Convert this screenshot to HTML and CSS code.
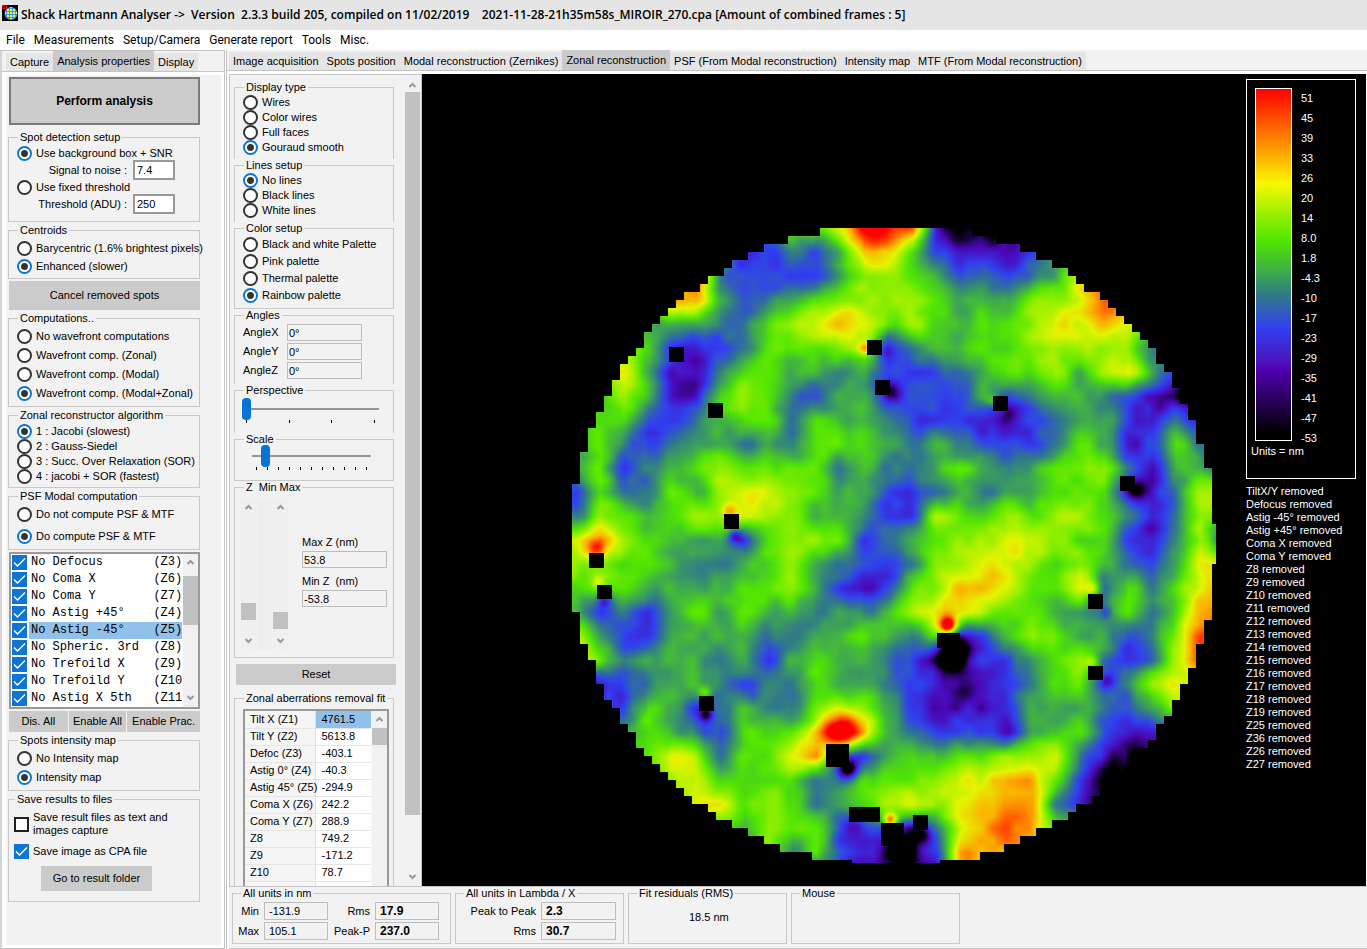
FILE: index.html
```html
<!DOCTYPE html>
<html lang="en">
<head>
<meta charset="utf-8">
<title>Shack Hartmann Analyser</title>
<link rel="stylesheet" href="styles.css">
</head>
<body>
<header class="titlebar">
  <svg class="logo" viewBox="0 0 16 16" aria-hidden="true">
    <rect width="16" height="16" fill="#000"/>
    <circle cx="9" cy="8.500" r="6.500" fill="#3a9be8"/>
    <path d="M5 4h2v2H5zM8 4h2v2H8zM11 4h2v2h-2zM5 7h2v2H5zM8 7h2v2H8zM11 7h2v2h-2zM5 10h2v2H5zM8 10h2v2H8zM11 10h2v2h-2zM8 13h2v1H8zM8 2h2v1H8zM3 7h1v2H3zM14 7h1v2h-1z" fill="#f2f03a"/>
    <path d="M3 .5H.5V2H3v1.500H.5M4.500 0v4" fill="none" stroke="#f00"/>
  </svg>
  <h1 class="title">Shack Hartmann Analyser -&gt;&nbsp; Version&nbsp; 2.3.3 build 205, compiled on 11/02/2019 &nbsp;&nbsp; 2021-11-28-21h35m58s_MIROIR_270.cpa [Amount of combined frames : 5]</h1>
</header>
<nav class="menu">
  <a href="#">File</a><a href="#">Measurements</a><a href="#">Setup/Camera</a><a href="#">Generate report</a><a href="#">Tools</a><a href="#">Misc.</a>
</nav>
<main class="workspace">
  <section class="side">
    <div class="tabs side-tabs">
      <button class="tab">Capture</button><button class="tab active">Analysis properties</button><button class="tab">Display</button>
    </div>
    <div class="side-frame"><div class="side-body">
      <button class="btn primary">Perform analysis</button>
      <fieldset class="group spot">
        <legend>Spot detection setup</legend>
        <label class="opt r15"><input type="radio" name="spot" checked>Use background box + SNR</label>
        <label class="entry">Signal to noise :<input type="text" value="7.4"></label>
        <label class="opt r15"><input type="radio" name="spot">Use fixed threshold</label>
        <label class="entry">Threshold (ADU) :<input type="text" value="250"></label>
      </fieldset>
      <fieldset class="group">
        <legend>Centroids</legend>
        <label class="opt r18"><input type="radio" name="cent">Barycentric (1.6% brightest pixels)</label>
        <label class="opt r18"><input type="radio" name="cent" checked>Enhanced (slower)</label>
      </fieldset>
      <button class="btn tall">Cancel removed spots</button>
      <fieldset class="group">
        <legend>Computations..</legend>
        <label class="opt r19"><input type="radio" name="comp">No wavefront computations</label>
        <label class="opt r19"><input type="radio" name="comp">Wavefront comp. (Zonal)</label>
        <label class="opt r19"><input type="radio" name="comp">Wavefront comp. (Modal)</label>
        <label class="opt r19"><input type="radio" name="comp" checked>Wavefront comp. (Modal+Zonal)</label>
      </fieldset>
      <fieldset class="group">
        <legend>Zonal reconstructor algorithm</legend>
        <label class="opt r15"><input type="radio" name="algo" checked>1 : Jacobi (slowest)</label>
        <label class="opt r15"><input type="radio" name="algo">2 : Gauss-Siedel</label>
        <label class="opt r15"><input type="radio" name="algo">3 : Succ. Over Relaxation (SOR)</label>
        <label class="opt r15"><input type="radio" name="algo">4 : jacobi + SOR (fastest)</label>
      </fieldset>
      <fieldset class="group tight">
        <legend>PSF Modal computation</legend>
        <label class="opt r22"><input type="radio" name="psf">Do not compute PSF &amp; MTF</label>
        <label class="opt r22"><input type="radio" name="psf" checked>Do compute PSF &amp; MTF</label>
      </fieldset>
      <div class="listbox">
        <div class="list-rows">
          <label class="item"><input type="checkbox" checked><span>No Defocus       (Z3)</span></label>
          <label class="item"><input type="checkbox" checked><span>No Coma X        (Z6)</span></label>
          <label class="item"><input type="checkbox" checked><span>No Coma Y        (Z7)</span></label>
          <label class="item"><input type="checkbox" checked><span>No Astig +45°    (Z4)</span></label>
          <label class="item picked"><input type="checkbox" checked><span>No Astig -45°    (Z5)</span></label>
          <label class="item"><input type="checkbox" checked><span>No Spheric. 3rd  (Z8)</span></label>
          <label class="item"><input type="checkbox" checked><span>No Trefoild X    (Z9)</span></label>
          <label class="item"><input type="checkbox" checked><span>No Trefoild Y    (Z10)</span></label>
          <label class="item"><input type="checkbox" checked><span>No Astig X 5th   (Z11)</span></label>
        </div>
        <div class="scroll list-scroll">
          <svg viewBox="0 0 15 17"><path d="M4.500 10l3-3 3 3"/></svg><i class="thumb"></i><svg class="down" viewBox="0 0 15 17"><path d="M4.500 6l3 3 3-3"/></svg>
        </div>
      </div>
      <div class="btn-row"><button class="btn">Dis. All</button><button class="btn">Enable All</button><button class="btn">Enable Prac.</button></div>
      <fieldset class="group">
        <legend>Spots intensity map</legend>
        <label class="opt r19"><input type="radio" name="imap">No Intensity map</label>
        <label class="opt r19"><input type="radio" name="imap" checked>Intensity map</label>
      </fieldset>
      <fieldset class="group save">
        <legend>Save results to files</legend>
        <label class="check"><input type="checkbox"><span>Save result files as text and<br>images capture</span></label>
        <label class="check"><input type="checkbox" checked><span>Save image as CPA file</span></label>
        <button class="btn folder">Go to result folder</button>
      </fieldset>
    </div></div>
  </section>

  <section class="view">
    <div class="tabs view-tabs">
      <button class="tab">Image acquisition</button><button class="tab">Spots position</button><button class="tab">Modal reconstruction (Zernikes)</button><button class="tab active">Zonal reconstruction</button><button class="tab">PSF (From Modal reconstruction)</button><button class="tab">Intensity map</button><button class="tab">MTF (From Modal reconstruction)</button>
    </div>
    <div class="view-body">
      <aside class="settings">
        <div class="settings-body">
          <fieldset class="group open">
            <legend>Display type</legend>
            <label class="opt r15"><input type="radio" name="disp">Wires</label>
            <label class="opt r15"><input type="radio" name="disp">Color wires</label>
            <label class="opt r15"><input type="radio" name="disp">Full faces</label>
            <label class="opt r15"><input type="radio" name="disp" checked>Gouraud smooth</label>
          </fieldset>
          <fieldset class="group open">
            <legend>Lines setup</legend>
            <label class="opt r15"><input type="radio" name="lines" checked>No lines</label>
            <label class="opt r15"><input type="radio" name="lines">Black lines</label>
            <label class="opt r15"><input type="radio" name="lines">White lines</label>
          </fieldset>
          <fieldset class="group">
            <legend>Color setup</legend>
            <label class="opt r17"><input type="radio" name="pal">Black and white Palette</label>
            <label class="opt r17"><input type="radio" name="pal">Pink palette</label>
            <label class="opt r17"><input type="radio" name="pal">Thermal palette</label>
            <label class="opt r17"><input type="radio" name="pal" checked>Rainbow palette</label>
          </fieldset>
          <fieldset class="group open">
            <legend>Angles</legend>
            <label class="angle"><span>AngleX</span><input class="flat" type="text" value="0°"></label>
            <label class="angle"><span>AngleY</span><input class="flat" type="text" value="0°"></label>
            <label class="angle"><span>AngleZ</span><input class="flat" type="text" value="0°"></label>
          </fieldset>
          <fieldset class="group open slide">
            <legend>Perspective</legend>
            <input type="range" min="0" max="100" value="0" aria-label="Perspective">
            <div class="ticks"><i></i><i></i><i></i><i></i></div>
          </fieldset>
          <fieldset class="group slide scale">
            <legend>Scale</legend>
            <div class="inset">
              <input type="range" min="0" max="100" value="8" aria-label="Scale">
              <div class="ticks"><i></i><i></i><i></i><i></i><i></i><i></i><i></i><i></i><i></i><i></i><i></i></div>
            </div>
          </fieldset>
          <fieldset class="group zrange">
            <legend>Z&nbsp; Min Max</legend>
            <div class="zgrid">
              <div class="scroll zscroll"><svg viewBox="0 0 15 17"><path d="M4.500 10l3-3 3 3"/></svg><i class="thumb zmin"></i><svg class="down" viewBox="0 0 15 17"><path d="M4.500 6l3 3 3-3"/></svg></div>
              <div class="ztrack"></div>
              <div class="scroll zscroll"><svg viewBox="0 0 15 17"><path d="M4.500 10l3-3 3 3"/></svg><i class="thumb zmax"></i><svg class="down" viewBox="0 0 15 17"><path d="M4.500 6l3 3 3-3"/></svg></div>
              <div class="zfields">
                <label>Max Z (nm)<input class="flat" type="text" value="53.8"></label>
                <label>Min Z&nbsp; (nm)<input class="flat" type="text" value="-53.8"></label>
              </div>
            </div>
          </fieldset>
          <button class="btn reset">Reset</button>
          <fieldset class="group open fit">
            <legend>Zonal aberrations removal fit</legend>
            <div class="table-box">
              <table>
                <tr><th>Tilt X (Z1)</th><td class="picked">4761.5</td></tr>
                <tr><th>Tilt Y (Z2)</th><td>5613.8</td></tr>
                <tr><th>Defoc (Z3)</th><td>-403.1</td></tr>
                <tr><th>Astig 0° (Z4)</th><td>-40.3</td></tr>
                <tr><th>Astig 45° (Z5)</th><td>-294.9</td></tr>
                <tr><th>Coma X (Z6)</th><td>242.2</td></tr>
                <tr><th>Coma Y (Z7)</th><td>288.9</td></tr>
                <tr><th>Z8</th><td>749.2</td></tr>
                <tr><th>Z9</th><td>-171.2</td></tr>
                <tr><th>Z10</th><td>78.7</td></tr>
                <tr><th>&nbsp;</th><td></td></tr>
              </table>
              <div class="scroll table-scroll"><svg viewBox="0 0 15 17"><path d="M4.500 10l3-3 3 3"/></svg><i class="thumb"></i></div>
            </div>
          </fieldset>
        </div>
        <div class="scroll main-scroll"><svg viewBox="0 0 15 17"><path d="M4.500 12l3-3 3 3"/></svg><i class="thumb"></i><svg class="down" viewBox="0 0 15 17"><path d="M4.500 6l3 3 3-3"/></svg></div>
      </aside>
      <div class="stage">
        <canvas id="map" width="644" height="640"></canvas>
        <div class="overlay">
          <div class="key">
            <div class="key-main">
              <div class="ramp"></div>
              <ul class="marks"><li>51</li><li>45</li><li>39</li><li>33</li><li>26</li><li>20</li><li>14</li><li>8.0</li><li>1.8</li><li>-4.3</li><li>-10</li><li>-17</li><li>-23</li><li>-29</li><li>-35</li><li>-41</li><li>-47</li><li>-53</li></ul>
            </div>
            <div class="units">Units = nm</div>
          </div>
          <ul class="removed"><li>TiltX/Y removed</li><li>Defocus removed</li><li>Astig -45° removed</li><li>Astig +45° removed</li><li>Coma X removed</li><li>Coma Y removed</li><li>Z8 removed</li><li>Z9 removed</li><li>Z10 removed</li><li>Z11 removed</li><li>Z12 removed</li><li>Z13 removed</li><li>Z14 removed</li><li>Z15 removed</li><li>Z16 removed</li><li>Z17 removed</li><li>Z18 removed</li><li>Z19 removed</li><li>Z25 removed</li><li>Z36 removed</li><li>Z26 removed</li><li>Z27 removed</li></ul>
        </div>
      </div>
    </div>
    <footer class="stats">
      <fieldset class="group stat nm">
        <legend>All units in nm</legend>
        <label for="s-min">Min</label><input class="flat" id="s-min" type="text" value="-131.9">
        <label for="s-rms">Rms</label><input class="flat strong" id="s-rms" type="text" value="17.9">
        <label for="s-max">Max</label><input class="flat" id="s-max" type="text" value="105.1">
        <label for="s-pp">Peak-P</label><input class="flat strong" id="s-pp" type="text" value="237.0">
      </fieldset>
      <fieldset class="group stat lambda">
        <legend>All units in Lambda / X</legend>
        <label for="l-pp">Peak to Peak</label><input class="flat strong" id="l-pp" type="text" value="2.3">
        <label for="l-rms">Rms</label><input class="flat strong" id="l-rms" type="text" value="30.7">
      </fieldset>
      <fieldset class="group stat resid"><legend>Fit residuals (RMS)</legend><output>18.5 nm</output></fieldset>
      <fieldset class="group stat mouse"><legend>Mouse</legend></fieldset>
    </footer>
  </section>
</main>
<script src="map.js"></script>
</body>
</html>
```
FILE: styles.css
```css
* { box-sizing: border-box; }
body { margin: 0; min-height: 100vh; display: flex; flex-direction: column; background: #fff; color: #000; font: 11px/13px "Liberation Sans", Arial, sans-serif; }
button, input { font: inherit; color: inherit; margin: 0; }
ul { list-style: none; margin: 0; padding: 0; }

.titlebar { height: 30px; background: #e5e5e5; display: flex; align-items: center; padding: 0 2px; gap: 3px; }
.logo { width: 16px; height: 16px; margin-bottom: 4px; }
.title { margin: 0; font: 600 12px/16px "Open Sans", "Noto Sans", sans-serif; white-space: nowrap; }
.menu { height: 20px; display: flex; align-items: center; gap: 9px; padding-left: 6px; }
.menu a { color: #000; text-decoration: none; font: 12px/16px Roboto, "Open Sans", sans-serif; }

.workspace { flex: 1; display: flex; min-height: 0; }
.tabs { display: flex; height: 21px; background: #f2f2f2; border-bottom: 1px solid #c4c4c4; }
.tab { border: 0; background: #e5e5e5; padding: 0 4px; white-space: nowrap; height: 18px; align-self: flex-end; }
.tab.active { background: #cacaca; height: 20px; }

.side { width: 225px; flex: none; display: flex; flex-direction: column; border: 1px solid #c4c4c4; border-left: 2px solid #d4d4d4; }
.side-tabs { padding-left: 4px; }
.side-frame { flex: 1; padding: 3px 3px 3px 4px; background: #fff; }
.side-body { background: #f2f2f2; height: 100%; padding: 2px 21px 0 3px; display: flex; flex-direction: column; gap: 2px; }

.group { margin: 0; min-width: 0; border: 1px solid #c8c8c8; padding: 3px 6px 3px 8px; }
.side .group { margin-left: -1px; }
.group legend { margin-left: 1px; padding: 0 2px; line-height: 12px; height: 12px; white-space: nowrap; }
.group.spot { padding-bottom: 7px; }
.group.tight { padding-top: 1px; padding-bottom: 2px; }
.group.open { border-bottom: 0; }
.opt { display: flex; align-items: center; gap: 4px; white-space: nowrap; }
.r15 { height: 15px; } .r17 { height: 17px; } .r18 { height: 18px; } .r19 { height: 19px; } .r22 { height: 22px; }
input[type=radio] { appearance: none; flex: none; width: 15px; height: 15px; border: 2px solid #333; border-radius: 50%; background: #fff; }
input[type=radio]:checked { border-color: #0f75d4; background: radial-gradient(circle, #333 0 3px, #fff 4px); }
input[type=checkbox] { appearance: none; flex: none; width: 15px; height: 15px; border: 2px solid #222; background: #fff; }
input[type=checkbox]:checked { border: 0; background: #0f75d4 url("data:image/svg+xml,%3Csvg xmlns='http://www.w3.org/2000/svg' viewBox='0 0 15 15'%3E%3Cpath d='M2 7.500l3.500 3.500L13 3.500' fill='none' stroke='white' stroke-width='1.400'/%3E%3C/svg%3E"); }
.entry { display: flex; align-items: center; justify-content: flex-end; gap: 6px; height: 20px; margin-top: -1px; padding-right: 18px; }
.entry input { width: 42px; height: 20px; border: 2px solid #999; background: #fff; padding: 0 2px; }

.btn { border: 0; background: #cbcbcb; padding: 0; height: 21px; text-align: center; white-space: nowrap; }
.btn.primary { height: 48px; border: 2px solid #7a7a7a; font-weight: bold; font-size: 12px; margin-bottom: 4px; }
.btn.tall { height: 29px; }
.btn-row { display: grid; grid-template-columns: 58fr 57fr 72fr; gap: 1px; }

.listbox { border: 2px solid #999; background: #fff; display: flex; height: 157px; }
.list-rows { flex: 1; min-width: 0; overflow: hidden; }
.item { display: flex; height: 17px; align-items: center; gap: 2px; padding-left: 1px; font: 12px/17px "Liberation Mono", monospace; white-space: pre; }
.item span { flex: 1; min-width: 0; overflow: hidden; padding-left: 2px; }
.item.picked span, td.picked { background: #91c1ea; }
.scroll { flex: none; width: 15px; background: #f1f1f1; display: flex; flex-direction: column; }
.scroll svg { width: 15px; height: 17px; flex: none; fill: none; stroke: #999; stroke-width: 2; }
.scroll .thumb { background: #c1c1c1; display: block; }
.scroll .down { margin-top: auto; }
.list-scroll { margin-left: 1px; }
.list-scroll .thumb { height: 49px; margin-top: 5px; }
.save { padding: 6px 6px 10px 5px; }
.check { display: flex; align-items: center; gap: 4px; margin-bottom: 7px; white-space: nowrap; }
.folder { display: block; width: 111px; height: 25px; margin-left: 27px; }

.view { flex: 1; min-width: 0; display: flex; flex-direction: column; border-left: 1px solid #c4c4c4; margin-left: 1px; }
.view-tabs { height: 21px; padding-left: 2px; }
.view-body { display: flex; flex: 1; min-height: 0; margin: 3px 1px 0 2px; }
.settings { width: 193px; flex: none; display: flex; background: #f2f2f2; border: 1px solid #c4c4c4; border-bottom: 0; }
.settings-body { flex: 1; min-width: 0; height: 811px; overflow: hidden; padding: 6px 11px 0 4px; }
.settings .group { padding-top: 2px; padding-bottom: 4px; }
.main-scroll { margin-right: 1px; }
.main-scroll .thumb { height: 723px; }
.flat { border: 1px solid #bdbdbd; background: #f2f2f2; padding: 0 1px; height: 17px; min-width: 0; }
.angle { display: grid; grid-template-columns: 44px 75px; height: 19px; align-items: center; }
.settings .slide { height: 49px; padding: 2px 14px 0 7px; }
.slide legend { margin-left: 2px; }
.slide input { appearance: none; display: block; width: 100%; height: 22px; background: linear-gradient(#959595, #959595) center / 100% 2px no-repeat; }
.slide input::-webkit-slider-thumb { appearance: none; width: 9px; height: 22px; border-radius: 4px; background: #0873d6; }
.ticks { display: flex; justify-content: space-between; padding: 0 4px; }
.ticks i { width: 1px; height: 3px; background: #000; }
.settings .scale { height: 48px; padding-top: 0; }
.inset { padding: 0 8px 0 10px; }
.settings .zrange { height: 177px; padding: 0 6px 0; }
.zrange legend { margin-left: 3px; }
.zgrid { display: flex; height: 151px; margin-top: 6px; }
.zscroll { background: #f0f0f0; }
.zscroll .thumb { height: 17px; }
.zmin { margin-top: 87px; } .zmax { margin-top: 96px; }
.ztrack { width: 15px; margin: 0 1px; background: #eee; }
.zfields { width: 85px; margin: 37px 0 0 14px; }
.zfields label { display: block; margin-bottom: 7px; }
.zfields input { display: block; width: 100%; margin-top: 2px; }
.reset { width: 160px; display: block; margin: 6px 0 7px 2px; }
.settings .fit { padding: 5px 4px 0 8px; height: 200px; }
.table-box { display: flex; height: 187px; border: 2px solid #999; background: #f8f8f8; }
table { flex: 1; border-collapse: collapse; table-layout: fixed; width: 125px; }
th, td { height: 17px; padding: 0 0 0 5px; border-bottom: 1px solid #e6e6e6; font-weight: normal; text-align: left; white-space: nowrap; }
th { width: 70px; border-right: 1px solid #e0e0e0; background: #f5f5f5; }
td { background: #fff; padding-left: 6px; }
.table-scroll { margin-left: 1px; }
.table-scroll .thumb { height: 17px; }

.stage { flex: 1; min-width: 0; position: relative; background: #000; padding-top: 154px; display: flex; justify-content: center; align-items: flex-start; overflow: hidden; }
.overlay { position: absolute; top: 5px; right: 10px; color: #fff; }
.key { width: 110px; border: 1px solid #fff; height: 400px; padding: 8px; }
.key-main { display: flex; gap: 9px; height: 353px; }
.ramp { width: 37px; border: 1px solid #fff; background: linear-gradient(#f00 0%, #ff8000 14%, #f8f800 27%, #a0f000 35%, #50e800 43%, #40b440 51%, #308080 58%, #3040f0 68%, #4818c0 77%, #5000b0 80%, #000 98%); }
.marks { font-size: 11px; line-height: 20px; }
.units { padding-top: 4px; margin-left: -4px; }
.removed { margin-top: 6px; }

.stats { flex: none; height: 63px; background: #f2f2f2; border-top: 1px solid #c4c4c4; border-bottom: 1px solid #c4c4c4; margin-left: 2px; padding: 0 0 0 3px; display: flex; gap: 4px; align-items: flex-start; }
.stat { height: 57px; padding: 3px 8px 0 4px; display: grid; align-content: start; align-items: center; row-gap: 2px; column-gap: 5px; }
.stat legend { margin-left: 4px; }
.stat label { text-align: right; white-space: nowrap; }
.stat .flat { padding-left: 4px; height: 18px; width: 100%; }
.stat .strong { font-weight: bold; font-size: 12px; }
.nm { width: 219px; grid-template-columns: 22px 64px 37px 64px; }
.lambda { width: 169px; grid-template-columns: 76px 75px; }
.resid { width: 159px; }
.resid output { padding: 9px 0 0 56px; }
.mouse { width: 169px; }
```
FILE: map.js
```js
// Wavefront height samples on a 24px lattice; 0 = lowest (black), 9 = highest (red).
const heights = [
  "3333333335579991000333333333",
  "3333333223247752111244444444",
  "6666693222246654232347888888",
  "6666884234566665444667999999",
  "6664443356787565455677875555",
  "6665212355566234455666663333",
  "7774113554434222345564674222",
  "5464115653244122242344321000",
  "5552234553544322211234421311",
  "4532344343555434322235412531",
  "4523456555534334543455631442",
  "2533546666544223434455521367",
  "3654566666443226556566531365",
  "7865444256652345667765521362",
  "6655433456432236677656432477",
  "5554444556421256887557353578",
  "4232454544343467765544353589",
  "7422444433445435224654423699",
  "7534443424544321122456323699",
  "0123443233544321112355236777",
  "2225423433566421112444324666",
  "2245432555797432221445211111",
  "2245763557822454556673100000",
  "2245675555335556778852000000",
  "2245677565345676788831000000",
  "2245675465522213789855000000",
  "2245675463521112888855555555",
  "2245675463211101888855555555"
];
const colours = [
  [0, 0, 0], [74, 8, 184], [48, 64, 240], [48, 120, 140], [64, 174, 72],
  [80, 228, 4], [150, 240, 0], [228, 244, 0], [250, 176, 0], [255, 84, 0], [255, 0, 0]
];
// Local bumps near the missing spots: x, y, radius, amplitude.
const bumps = [
  [293, 120, 6, 2], [312, 122, 9, -1], [318, 161, 8, -1],
  [162, 307, 7, -2], [157, 283, 7, 2], [302, 8, 22, 1.5],
  [436, 184, 8, -0.7], [420, 172, 6, 1.5], [563, 262, 10, -2],
  [24, 320, 9, 2.5], [32, 372, 7, -2], [26, 354, 6, 1.5], [520, 360, 7, 2], [534, 384, 6, -1],
  [520, 434, 7, 1.5], [535, 452, 7, -1], [134, 486, 7, -2], [132, 464, 7, 2],
  [376, 397, 9, 6], [380, 423, 15, -4], [390, 462, 12, -0.8], [268, 504, 20, 3], [276, 541, 11, -3],
  [282, 596, 10, -1], [318, 592, 7, 5], [330, 624, 14, -3], [350, 606, 10, -2],
  [180, 270, 22, 1]
];
// Missing spots: x, y, width, height.
const holes = [
  [97, 119, 15, 15], [295, 112, 15, 15], [303, 152, 15, 15], [136, 175, 15, 15], [152, 286, 15, 15],
  [421, 168, 15, 15], [548, 248, 15, 15], [17, 325, 15, 15], [25, 357, 15, 14], [516, 366, 15, 15],
  [516, 438, 15, 14], [127, 468, 15, 15], [365, 405, 23, 15], [254, 516, 23, 23],
  [277, 579, 31, 15], [309, 595, 23, 23], [341, 587, 15, 15]
];

const canvas = document.getElementById("map");
const ctx = canvas.getContext("2d");
const W = canvas.width, H = canvas.height;
const img = ctx.createImageData(W, H);

function at(i, j) {
  const h = +heights[Math.max(0, Math.min(27, j))][Math.max(0, Math.min(27, i))];
  return h === 1 ? 1.2 : h;
}
function cubic(a, b, c, d, t) {
  const smooth = b + 0.5 * t * (c - a + t * (2 * a - 5 * b + 4 * c - d + t * (3 * (b - c) + d - a)));
  return 0.4 * smooth + 0.6 * (b + (c - b) * t);
}
function sample(x, y) {
  const u = (x - 4) / 24, v = y / 24;
  const i = Math.floor(u), j = Math.floor(v);
  const r = [-1, 0, 1, 2].map(k => cubic(at(i - 1, j + k), at(i, j + k), at(i + 1, j + k), at(i + 2, j + k), u - i));
  return cubic(r[0], r[1], r[2], r[3], v - j);
}
function hash(i, j) {
  const s = Math.sin(i * 127.1 + j * 311.7) * 43758.5453;
  return s - Math.floor(s) - 0.5;
}
function noise(x, y, size) {
  const u = x / size, v = y / size, i = Math.floor(u), j = Math.floor(v), a = u - i, b = v - j;
  return (hash(i, j) * (1 - a) + hash(i + 1, j) * a) * (1 - b) + (hash(i, j + 1) * (1 - a) + hash(i + 1, j + 1) * a) * b;
}
for (let y = 0; y < H; y++) {
  for (let x = 0; x < W; x++) {
    const p = (y * W + x) * 4;
    img.data[p + 3] = 255;
    const cx = (Math.floor(x / 8) * 8 + 4 - 321) * 0.995, cy = Math.floor(y / 8) * 8 + 4 - 317;
    if (cx * cx + cy * cy > 322 * 322 || y > 634) continue;
    let h = sample(x, y) + noise(x, y, 12) * 0.9;
    for (const [bx, by, r, a] of bumps) {
      const d = ((x - bx) ** 2 + (y - by) ** 2) / (r * r);
      if (d < 6) h += a * Math.exp(-d);
    }
    h = Math.max(0, Math.min(10, h));
    const k = Math.min(9, Math.floor(h)), f = h - k;
    for (let c = 0; c < 3; c++) img.data[p + c] = colours[k][c] * (1 - f) + colours[k + 1][c] * f;
  }
}
ctx.putImageData(img, 0, 0);
ctx.fillStyle = "#000";
holes.forEach(h => ctx.fillRect(...h));
```
